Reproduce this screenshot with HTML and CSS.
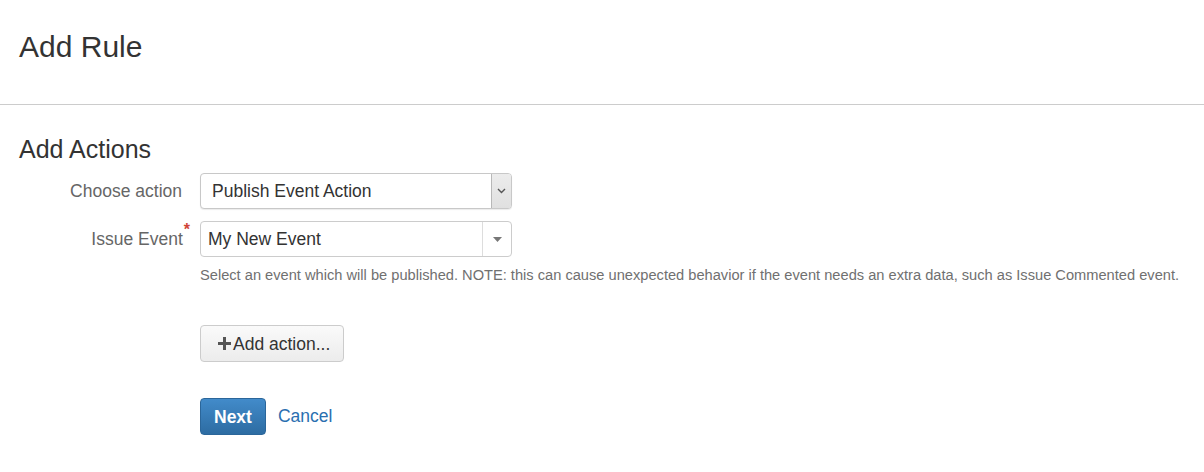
FILE: index.html
```html
<!DOCTYPE html>
<html lang="en">
<head>
  <meta charset="UTF-8" />
  <meta name="viewport" content="width=device-width, initial-scale=1" />
  <title>Add Rule</title>
  <link rel="stylesheet" href="styles.css">
</head>
<body>
  <header class="page-header">
    <h1>Add Rule</h1>
  </header>
  <div class="content">
    <h2 class="section-title">Add Actions</h2>
    <form class="rule-form">
      <div class="field">
        <label class="field-label">Choose action</label>
        <div class="field-control">
          <div class="select select-native">
            <span class="select-value">Publish Event Action</span>
            <span class="select-arrow">
              <svg width="9" height="6" viewBox="0 0 9 6"><path d="M1 1 L4.5 4.5 L8 1" fill="none" stroke="#555" stroke-width="1.4"/></svg>
            </span>
          </div>
        </div>
      </div>
      <div class="field">
        <label class="field-label">Issue Event<span class="required">*</span></label>
        <div class="field-control">
          <div class="select select-combo">
            <span class="select-value">My New Event</span>
            <span class="select-arrow">
              <svg width="9" height="5" viewBox="0 0 9 5"><path d="M0 0 H9 L4.5 5 Z" fill="#777"/></svg>
            </span>
          </div>
          <p class="help-text">Select an event which will be published. NOTE: this can cause unexpected behavior if the event needs an extra data, such as Issue Commented event.</p>
        </div>
      </div>
      <div class="field field-add">
        <div></div>
        <div class="field-control">
          <button type="button" class="btn btn-default">
            <svg class="icon-plus" width="13" height="13" viewBox="0 0 13 13"><path d="M5 0 H8 V5 H13 V8 H8 V13 H5 V8 H0 V5 H5 Z" fill="#555"/></svg>Add action...
          </button>
        </div>
      </div>
      <div class="field field-buttons">
        <div></div>
        <div class="field-control buttons">
          <button type="submit" class="btn btn-primary">Next</button>
          <a href="#" class="cancel-link">Cancel</a>
        </div>
      </div>
    </form>
  </div>
</body>
</html>
```

FILE: styles.css
```css
body {
  font-family: 'Liberation Sans', Arial, sans-serif;
  color: #333;
  background-color: #fff;
  margin: 0;
  padding: 0;
}
.page-header {
  padding: 30px 19px 41px;
  border-bottom: 1px solid #ccc;
}
.page-header h1 {
  margin: 0;
  font-size: 30px;
  font-weight: normal;
  line-height: 33px;
}
.content {
  padding: 0 19px;
}
.section-title {
  margin: 30px 0 10px;
  font-size: 25px;
  font-weight: normal;
  line-height: 28px;
}
.field {
  display: grid;
  grid-template-columns: 163px 1fr;
  column-gap: 18px;
  margin-bottom: 12px;
}
.field-label {
  text-align: right;
  font-size: 17.5px;
  color: #666;
  line-height: 36px;
  white-space: nowrap;
}
.required {
  color: #d04437;
  font-size: 16px;
  font-weight: bold;
  vertical-align: top;
  line-height: 18px;
  margin-left: 1px;
  margin-right: -8px;
}
.select {
  display: flex;
  align-items: center;
  width: 312px;
  height: 36px;
  box-sizing: border-box;
  border: 1px solid #ccc;
  border-radius: 4px;
  background-color: #fff;
  font-size: 17.5px;
  color: #333;
}
.select-native {
  box-shadow: 0 1px 1px rgba(0, 0, 0, 0.08);
  border-color: #c8c8c8;
}
.select-native .select-value {
  flex: 1;
  padding-left: 11px;
  padding-top: 1px;
}
.select-native .select-arrow {
  width: 19px;
  align-self: stretch;
  display: flex;
  align-items: center;
  justify-content: center;
  border-left: 1px solid #b8b8b8;
  border-radius: 0 3px 3px 0;
  background: linear-gradient(to bottom, #ececec, #e0e0e0);
}
.select-combo .select-value {
  flex: 1;
  padding-left: 7px;
}
.select-combo .select-arrow {
  width: 28px;
  align-self: stretch;
  display: flex;
  align-items: center;
  justify-content: center;
  border-left: 1px solid #ddd;
}
.help-text {
  margin: 8px 0 0;
  font-size: 14.65px;
  line-height: 20px;
  color: #707070;
  white-space: nowrap;
}
.field-add {
  margin-top: 40px;
}
.field-buttons {
  margin-top: 36px;
}
.btn {
  font-family: inherit;
  font-size: 17.5px;
  line-height: 20px;
  height: 37px;
  padding: 0 13px 0 17px;
  border-radius: 4px;
  cursor: pointer;
  display: inline-flex;
  align-items: center;
}
.btn-default {
  color: #333;
  border: 1px solid #ccc;
  background: linear-gradient(to bottom, #fafafa, #ececec);
}
.icon-plus {
  margin-right: 2px;
}
.btn-primary {
  color: #fff;
  font-weight: bold;
  padding: 0 13px;
  border: 1px solid #2b669a;
  background: linear-gradient(to bottom, #428bca, #2d6ca2);
}
.buttons {
  display: flex;
  align-items: center;
  gap: 12px;
}
.cancel-link {
  font-size: 17.5px;
  color: #2a6fb0;
  text-decoration: none;
}
```
